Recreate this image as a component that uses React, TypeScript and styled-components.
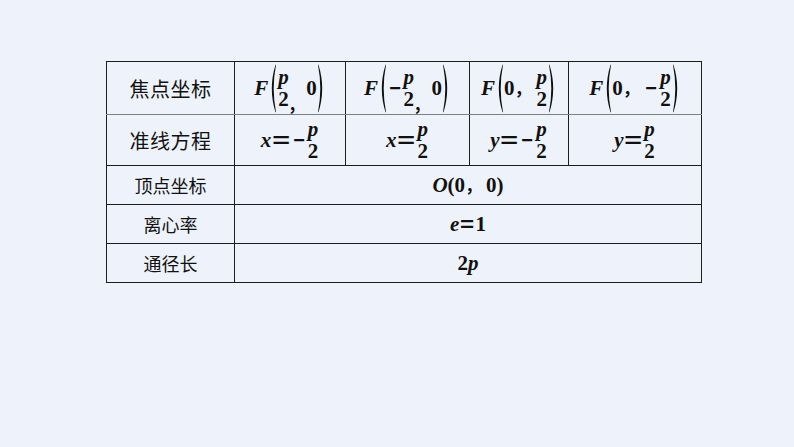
import React from "react";
import styled, { createGlobalStyle } from "styled-components";

const GlobalStyle = createGlobalStyle`
  html, body {
    margin: 0;
    padding: 0;
    background: #eef3fb;
  }
  body {
    width: 794px;
    height: 447px;
    overflow: hidden;
  }
`;

const Page = styled.div`
  padding: 61px 0 0 106px;
  box-sizing: border-box;
  width: 794px;
  height: 447px;
  background: #eef3fb;
`;

const Table = styled.table`
  border-collapse: collapse;
  table-layout: fixed;
  width: 595px;
  color: #111;
  td {
    border: 1px solid #1c1c1c;
    padding: 0;
    text-align: center;
    vertical-align: middle;
  }
`;

const Row = styled.tr<{ $h: number; $lightBottom?: boolean }>`
  height: ${(p) => p.$h}px;
  td {
    border-bottom-color: ${(p) => (p.$lightBottom ? "#7d7f84" : "#1c1c1c")};
  }
`;

const Label = styled.td<{ $size: number }>`
  font-family: "Noto Sans CJK SC", "Noto Sans", sans-serif;
  font-size: ${(p) => p.$size}px;
  font-weight: 400;
  letter-spacing: ${(p) => (p.$size > 19 ? 0.5 : 0)}px;
`;

const MathCell = styled.td``;

const MathLine = styled.span`
  display: inline-flex;
  align-items: center;
  font-family: "Liberation Serif", "Times New Roman", serif;
  font-weight: 700;
  font-size: 21px;
  line-height: 24px;
  white-space: nowrap;
`;

const Var = styled.i`
  font-family: "Liberation Serif", "Times New Roman", serif;
  font-style: italic;
  font-weight: 700;
`;

const Num = styled.span`
  font-family: "Liberation Serif", "Times New Roman", serif;
  font-weight: 700;
`;

const Frac = styled.span`
  display: inline-flex;
  flex-direction: column;
  align-items: center;
  font-family: "Liberation Serif", "Times New Roman", serif;
  font-weight: 700;
  font-size: 21px;
  line-height: 22px;
  margin: 0 1px;
`;

const Op = styled.span<{ $k: number; $gap: number }>`
  display: inline-block;
  font-family: "Liberation Sans", Arial, sans-serif;
  font-weight: 700;
  transform: scaleX(${(p) => p.$k});
  margin: 0 ${(p) => (12.3 * (p.$k - 1)) / 2 + p.$gap}px;
`;

const Comma = styled.span<{ $low?: boolean }>`
  font-family: "Noto Sans CJK SC", sans-serif;
  font-weight: 700;
  font-size: 17px;
  align-self: ${(p) => (p.$low ? "flex-end" : "center")};
  margin: ${(p) => (p.$low ? "0 11px 0 0" : "0 4px 0 0")};
  line-height: ${(p) => (p.$low ? "20px" : "24px")};
`;

const ParenSvg = styled.svg<{ $right?: boolean }>`
  display: block;
  margin: 0 1px;
  transform: ${(p) => (p.$right ? "scaleX(-1)" : "none")};
`;

const Paren = ({ right }: { right?: boolean }) => (
  <ParenSvg $right={right} width="7" height="49" viewBox="0 0 7 49">
    <path d="M6.6 0.4 Q-1 24.5 6.6 48.6 L7 48 Q2.4 24.5 7 1 Z" fill="#111" />
  </ParenSvg>
);

const PFrac = () => (
  <Frac>
    <Var>p</Var>
    <Num>2</Num>
  </Frac>
);

const Minus = () => (
  <Op $k={0.95} $gap={2}>
    −
  </Op>
);
const Equals = ({ k }: { k: number }) => (
  <Op $k={k} $gap={1}>
    =
  </Op>
);

export default function App() {
  return (
    <>
      <GlobalStyle />
      <Page>
        <Table>
          <colgroup>
            <col style={{ width: 128 }} />
            <col style={{ width: 111 }} />
            <col style={{ width: 124 }} />
            <col style={{ width: 99 }} />
            <col style={{ width: 133 }} />
          </colgroup>
          <tbody>
            <Row $h={53} $lightBottom>
              <Label $size={20}>焦点坐标</Label>
              <MathCell>
                <MathLine>
                  <Var>F</Var>
                  <Paren />
                  <PFrac />
                  <Comma $low>,</Comma>
                  <Num>0</Num>
                  <Paren right />
                </MathLine>
              </MathCell>
              <MathCell>
                <MathLine>
                  <Var>F</Var>
                  <Paren />
                  <Minus />
                  <PFrac />
                  <Comma $low>,</Comma>
                  <Num>0</Num>
                  <Paren right />
                </MathLine>
              </MathCell>
              <MathCell>
                <MathLine>
                  <Var>F</Var>
                  <Paren />
                  <Num>0</Num>
                  <Comma>，</Comma>
                  <PFrac />
                  <Paren right />
                </MathLine>
              </MathCell>
              <MathCell>
                <MathLine>
                  <Var>F</Var>
                  <Paren />
                  <Num>0</Num>
                  <Comma>，</Comma>
                  <Minus />
                  <PFrac />
                  <Paren right />
                </MathLine>
              </MathCell>
            </Row>
            <Row $h={51}>
              <Label $size={20}>准线方程</Label>
              <MathCell>
                <MathLine>
                  <Var>x</Var>
                  <Equals k={1.45} />
                  <Minus />
                  <PFrac />
                </MathLine>
              </MathCell>
              <MathCell>
                <MathLine>
                  <Var>x</Var>
                  <Equals k={1.45} />
                  <PFrac />
                </MathLine>
              </MathCell>
              <MathCell>
                <MathLine>
                  <Var>y</Var>
                  <Equals k={1.45} />
                  <Minus />
                  <PFrac />
                </MathLine>
              </MathCell>
              <MathCell>
                <MathLine>
                  <Var>y</Var>
                  <Equals k={1.45} />
                  <PFrac />
                </MathLine>
              </MathCell>
            </Row>
            <Row $h={39}>
              <Label $size={18}>顶点坐标</Label>
              <MathCell colSpan={4}>
                <MathLine>
                  <Var>O</Var>
                  <Num>(0</Num>
                  <Comma>，</Comma>
                  <Num>0)</Num>
                </MathLine>
              </MathCell>
            </Row>
            <Row $h={39}>
              <Label $size={18}>离心率</Label>
              <MathCell colSpan={4}>
                <MathLine>
                  <Var>e</Var>
                  <Equals k={1.15} />
                  <Num>1</Num>
                </MathLine>
              </MathCell>
            </Row>
            <Row $h={39}>
              <Label $size={18}>通径长</Label>
              <MathCell colSpan={4}>
                <MathLine>
                  <Num>2</Num>
                  <Var>p</Var>
                </MathLine>
              </MathCell>
            </Row>
          </tbody>
        </Table>
      </Page>
    </>
  );
}
